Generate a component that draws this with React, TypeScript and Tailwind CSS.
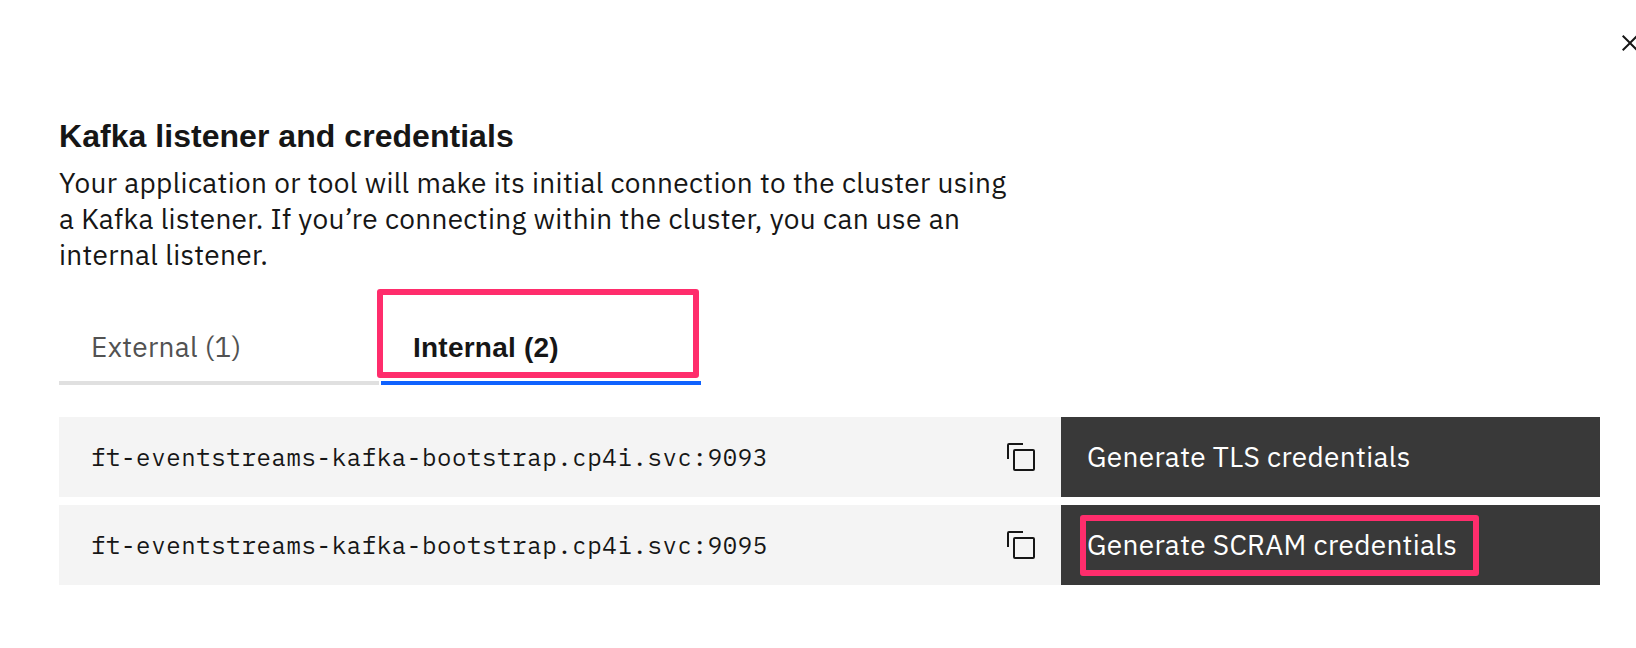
import React from "react";

const sans = "font-['IBM_Plex_Sans',Roboto,sans-serif]";
const bold = "font-['Helvetica_Neue','Liberation_Sans',sans-serif]";
const mono = "font-['IBM_Plex_Mono','Liberation_Mono',monospace]";

function CloseIcon() {
  return (
    <svg viewBox="0 0 32 32" className="h-8 w-8 shrink-0" fill="#161616">
      <path d="M24 9.4L22.6 8 16 14.6 9.4 8 8 9.4l6.6 6.6L8 22.6 9.4 24l6.6-6.6 6.6 6.6 1.4-1.4-6.6-6.6L24 9.4z" />
    </svg>
  );
}

function CopyIcon() {
  return (
    <svg viewBox="0 0 32 32" className="h-8 w-8 shrink-0" fill="#161616">
      <path d="M28,10V28H10V10H28m0-2H10a2,2,0,0,0-2,2V28a2,2,0,0,0,2,2H28a2,2,0,0,0,2-2V10a2,2,0,0,0-2-2Z" />
      <path d="M4,18H2V4A2,2,0,0,1,4,2H18V4H4Z" />
    </svg>
  );
}

interface ListenerProps {
  address: string;
  action: string;
  highlighted?: boolean;
}

function Listener({ address, action, highlighted }: ListenerProps) {
  return (
    <div className="flex h-20">
      <div className="flex w-[1002px] items-center justify-between bg-[#f4f4f4] pr-6 pl-8">
        <span className={`${mono} text-[24px] leading-8 tracking-[0.64px] whitespace-nowrap`}>{address}</span>
        <button aria-label="Copy">
          <CopyIcon />
        </button>
      </div>
      <button className="relative flex w-[539px] items-center bg-[#393939] pl-[26px] text-left text-white">
        <span className={`${sans} text-[28px] leading-9 tracking-[0.32px] whitespace-nowrap`}>{action}</span>
        {highlighted && (
          <span className="absolute top-[10px] left-[18.5px] h-[61px] w-[399.5px] rounded-[3px] border-6 border-[#ff2d6c]" />
        )}
      </button>
    </div>
  );
}

export default function App() {
  return (
    <main className="flex h-[648px] w-full flex-col overflow-hidden bg-white text-[#161616]">
      <header className="flex justify-end pt-[27px]">
        <button aria-label="Close" className="-mr-[10px]">
          <CloseIcon />
        </button>
      </header>
      <section className="flex flex-col pt-[57px] pl-[59px]">
        <h1 className={`${bold} text-[32px] leading-10 font-bold tracking-[0.04px] whitespace-nowrap`}>
          Kafka listener and credentials
        </h1>
        <p className={`${sans} mt-[9px] w-[960px] text-[28px] leading-9 tracking-[0.32px]`}>
          Your application or tool will make its initial connection to the cluster using a Kafka listener. If you’re
          connecting within the cluster, you can use an internal listener.
        </p>
        <nav className="relative mt-[28px] flex gap-[2px]">
          <button className={`${sans} flex h-[84px] w-80 items-center border-b-4 border-[#e0e0e0] pt-[12px] pl-8 text-[28px] leading-9 tracking-[0.32px] text-[#525252]`}>
            External (1)
          </button>
          <button className={`${bold} flex h-[84px] w-80 items-center border-b-4 border-[#0f62fe] pt-[14px] pl-8 text-[28px] leading-9 font-bold tracking-[0.23px]`}>
            Internal (2)
          </button>
          <span className="absolute -top-[12px] left-[318px] h-[88.5px] w-[321.5px] rounded-[3px] border-6 border-[#ff2d6c]" />
        </nav>
        <div className="mt-8 flex flex-col gap-2">
          <Listener address="ft-eventstreams-kafka-bootstrap.cp4i.svc:9093" action="Generate TLS credentials" />
          <Listener
            address="ft-eventstreams-kafka-bootstrap.cp4i.svc:9095"
            action="Generate SCRAM credentials"
            highlighted
          />
        </div>
      </section>
    </main>
  );
}
